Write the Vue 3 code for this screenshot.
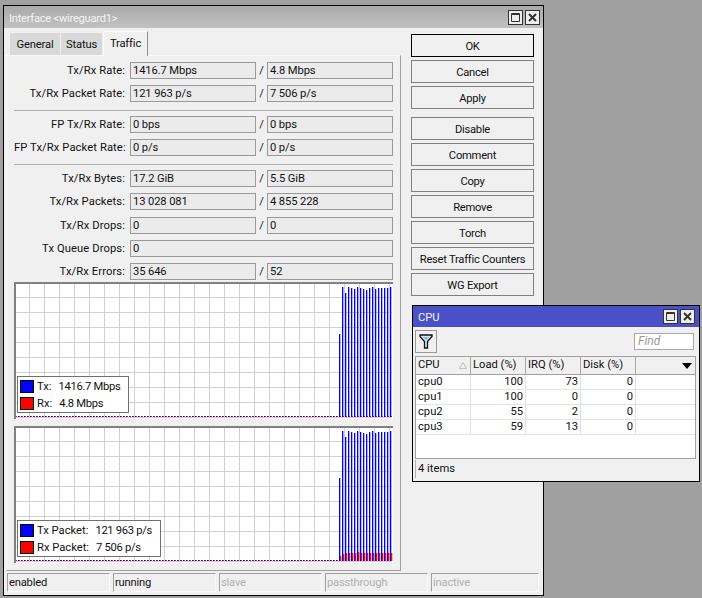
<template>
  <div class="desktop">
    <div class="window main-win">
      <div class="titlebar">
        <span class="title main-title">Interface &lt;wireguard1&gt;</span>
        <span class="win-btn"><svg width="13" height="13" viewBox="0 0 13 13"><path d="M2.5 2.500h8v8h-8zM2.500 3.500h8" fill="none" stroke="#333" /></svg></span>
        <span class="win-btn"><svg width="13" height="13" viewBox="0 0 13 13"><path d="M3 3l7 7M10 3l-7 7" fill="none" stroke="#333" stroke-width="2" /></svg></span>
      </div>
      <div class="win-body">
        <div class="left-col">
          <div class="tabs">
            <div v-for="t in tabs" :key="t.name" class="tab" :class="{ active: t.name === 'Traffic' }" :style="{ width: t.w + 'px' }">{{ t.name }}</div>
          </div>
          <div class="panel">
            <template v-for="(group, i) in groups" :key="i">
              <div v-if="i" class="sep"></div>
              <div class="group" :class="{ loose: i === 2 }">
                <div v-for="row in group" :key="row.label" class="row">
                  <span class="row-label">{{ row.label }}:</span>
                  <span v-if="row.rx === undefined" class="field wide">{{ row.tx }}</span>
                  <template v-else>
                    <span class="field">{{ row.tx }}</span>
                    <span class="slash">/</span>
                    <span class="field">{{ row.rx }}</span>
                  </template>
                </div>
              </div>
            </template>
            <div v-for="g in graphs" :key="g.id" class="graph">
              <svg class="graph-svg" width="377" height="135" viewBox="0 0 377 135">
                <defs>
                  <pattern :id="'dots-' + g.id" width="3" height="1" patternUnits="userSpaceOnUse">
                    <rect x="2" width="1" height="1" fill="#0000ff" />
                    <rect x="0" width="1" height="1" fill="#ff0000" />
                  </pattern>
                </defs>
                <path :d="gridPath" stroke="#d0d0d0" fill="none" />
                <rect x="0" y="132" width="376" height="1" :fill="'url(#dots-' + g.id + ')'" />
                <rect v-for="b in g.bars" :key="b.x" :x="b.x" :y="b.y" width="1.3" :height="b.h" :fill="b.c" />
              </svg>
              <div class="legend">
                <div v-for="l in g.legend" :key="l.name" class="legend-row">
                  <span class="swatch" :class="l.cls"></span>
                  <span class="legend-name">{{ l.name }}:</span>
                  <span class="legend-value">{{ l.value }}</span>
                </div>
              </div>
            </div>
          </div>
        </div>
        <div class="actions">
          <button v-for="b in buttons" :key="b" class="btn" :class="{ primary: b === 'OK', gap: b === 'Disable' }">{{ b }}</button>
        </div>
      </div>
      <div class="statusbar">
        <div v-for="s in statuses" :key="s.t" class="status-cell" :class="{ off: s.off }">{{ s.t }}</div>
      </div>
    </div>

    <div class="window cpu-win">
      <div class="titlebar cpu-title">
        <span class="title">CPU</span>
        <span class="win-btn"><svg width="13" height="13" viewBox="0 0 13 13"><path d="M2.5 2.500h8v8h-8zM2.500 3.500h8" fill="none" stroke="#333" /></svg></span>
        <span class="win-btn"><svg width="13" height="13" viewBox="0 0 13 13"><path d="M3 3l7 7M10 3l-7 7" fill="none" stroke="#333" stroke-width="2" /></svg></span>
      </div>
      <div class="toolbar">
        <span class="filter-btn">
          <svg width="14" height="15" viewBox="0 0 14 15"><path d="M1 1h12v1.500L8.500 7.500V14h-3V7.500L1 2.500z" fill="#d4e6f4" stroke="#111" stroke-width="1.300" /><path d="M4 3h6L7 6.500z" fill="#8ebce0" /></svg>
        </span>
        <span class="find">Find</span>
      </div>
      <div class="table">
        <div class="t-head">
          <div class="th c-num">CPU<svg class="sort" width="8" height="7" viewBox="0 0 8 7"><path d="M4 .5L7.500 6.500H.5z" fill="none" stroke="#c0c0c0" /></svg></div>
          <div class="th c-num">Load (%)</div>
          <div class="th c-num">IRQ (%)</div>
          <div class="th c-num">Disk (%)</div>
          <div class="th c-rest"><span class="caret"></span></div>
        </div>
        <div v-for="c in cpus" :key="c.name" class="t-row">
          <div class="td c-num">{{ c.name }}</div>
          <div class="td c-num right">{{ c.load }}</div>
          <div class="td c-num right">{{ c.irq }}</div>
          <div class="td c-num right">{{ c.disk }}</div>
          <div class="td c-rest"></div>
        </div>
      </div>
      <div class="items">4 items</div>
    </div>
  </div>
</template>

<script setup>
const tabs = [
  { name: 'General', w: 50 },
  { name: 'Status', w: 41 },
  { name: 'Traffic', w: 45 }
]

const groups = [
  [
    { label: 'Tx/Rx Rate', tx: '1416.7 Mbps', rx: '4.8 Mbps' },
    { label: 'Tx/Rx Packet Rate', tx: '121 963 p/s', rx: '7 506 p/s' }
  ],
  [
    { label: 'FP Tx/Rx Rate', tx: '0 bps', rx: '0 bps' },
    { label: 'FP Tx/Rx Packet Rate', tx: '0 p/s', rx: '0 p/s' }
  ],
  [
    { label: 'Tx/Rx Bytes', tx: '17.2 GiB', rx: '5.5 GiB' },
    { label: 'Tx/Rx Packets', tx: '13 028 081', rx: '4 855 228' },
    { label: 'Tx/Rx Drops', tx: '0', rx: '0' },
    { label: 'Tx Queue Drops', tx: '0' },
    { label: 'Tx/Rx Errors', tx: '35 646', rx: '52' }
  ]
]

const buttons = ['OK', 'Cancel', 'Apply', 'Disable', 'Comment', 'Copy', 'Remove', 'Torch', 'Reset Traffic Counters', 'WG Export']

const statuses = [
  { t: 'enabled' },
  { t: 'running' },
  { t: 'slave', off: true },
  { t: 'passthrough', off: true },
  { t: 'inactive', off: true }
]

const cpus = [
  { name: 'cpu0', load: 100, irq: 73, disk: 0 },
  { name: 'cpu1', load: 100, irq: 0, disk: 0 },
  { name: 'cpu2', load: 55, irq: 2, disk: 0 },
  { name: 'cpu3', load: 59, irq: 13, disk: 0 }
]

// grid lines every 15px
let gridPath = ''
for (let x = 13.5; x < 376; x += 15) gridPath += `M${x} 0V134`
for (let y = 13.5; y < 134; y += 15) gridPath += `M0 ${y}H376`

// top of each bar, px from the top of the plot
const tops = [50, 3, 9, 3, 4, 5, 3, 4, 5, 6, 4, 3, 5, 4, 4, 4, 4, 3]
const reds = [5, 7, 8, 8, 8, 8, 9, 8, 8, 8, 8, 8, 8, 8, 8, 8, 8, 8]

const bars1 = tops.map((y, i) => ({ x: 323 + i * 3, y, h: 133 - y, c: '#0000ff' }))

const bars2 = []
tops.forEach((y, i) => {
  bars2.push({ x: 323 + i * 3, y, h: 133 - y, c: '#0000ff' })
  bars2.push({ x: 324 + i * 3, y: 133 - reds[i], h: reds[i], c: '#ff0000' })
})

const graphs = [
  {
    id: 'rate',
    bars: bars1,
    legend: [
      { name: 'Tx', value: '1416.7 Mbps', cls: 'blue' },
      { name: 'Rx', value: '4.8 Mbps', cls: 'red' }
    ]
  },
  {
    id: 'packet',
    bars: bars2,
    legend: [
      { name: 'Tx Packet', value: '121 963 p/s', cls: 'blue' },
      { name: 'Rx Packet', value: '7 506 p/s', cls: 'red' }
    ]
  }
]
</script>

<style scoped>
.desktop {
  position: relative;
  width: 702px;
  height: 598px;
  overflow: hidden;
  background: #a0a0a0;
  font-family: Roboto, "Liberation Sans", sans-serif;
  font-size: 11.2px;
  color: #111;
}

.window {
  position: absolute;
  box-sizing: border-box;
  border: 1px solid #000;
  background: #f0f0f0;
  display: flex;
  flex-direction: column;
}

.main-win {
  left: 3px;
  top: 5px;
  width: 541px;
  height: 591px;
}

.cpu-win {
  left: 412px;
  top: 305px;
  width: 288px;
  height: 177px;
}

.titlebar {
  height: 22px;
  flex: none;
  display: flex;
  align-items: center;
  gap: 2px;
  padding: 0 3px 0 5px;
  background: linear-gradient(#a9a9a9, #c2c2c2);
}

.cpu-title {
  height: 21px;
  padding-right: 4px;
  background: #4b50c6;
}

.title {
  flex: 1;
  padding-top: 1px;
  color: #f4f4f4;
  font-size: 11.2px;
}

.main-title {
  padding-top: 3px;
  letter-spacing: -0.27px;
}

.win-btn {
  box-sizing: border-box;
  width: 15px;
  height: 15px;
  display: flex;
  align-items: center;
  justify-content: center;
  border: 1px solid #333;
  background: #eee;
}

.win-body {
  flex: 1;
  display: flex;
  padding: 2px 0 0 2px;
}

.left-col {
  width: 395px;
  margin-right: 10px;
}

.tabs {
  display: flex;
  align-items: flex-end;
  height: 25px;
  padding-left: 4px;
  gap: 1px;
}

.tab {
  box-sizing: border-box;
  height: 22px;
  line-height: 24px;
  text-align: center;
  letter-spacing: -0.15px;
  background: #d9d9d9;
}

.tab.active {
  height: 25px;
  line-height: 24px;
  margin-bottom: -1px;
  background: #f0f0f0;
  border-top: 1px solid #fafafa;
  border-left: 1px solid #fafafa;
  border-right: 1px solid #909090;
  position: relative;
  z-index: 1;
}

.panel {
  box-sizing: border-box;
  height: 516px;
  border-top: 1px solid #fafafa;
  border-left: 1px solid #fafafa;
  border-right: 1px solid #a0a0a0;
  border-bottom: 1px solid #a0a0a0;
  padding: 6px 7px 0 7px;
}

.group {
  display: flex;
  flex-direction: column;
  gap: 6px;
}

.group.loose {
  gap: 6.25px;
}

.sep {
  height: 1px;
  background: #b4b4b4;
  margin: 8px 0 5px;
}

.row {
  display: flex;
  align-items: center;
  height: 17px;
}

.row-label {
  box-sizing: border-box;
  width: 116px;
  flex: none;
  padding-right: 5px;
  text-align: right;
  letter-spacing: 0.1px;
  white-space: nowrap;
}

.field {
  box-sizing: border-box;
  width: 126px;
  height: 17px;
  line-height: 15px;
  padding-left: 2px;
  background: #ebebeb;
  border: 1px solid #999;
  letter-spacing: -0.12px;
  white-space: nowrap;
}

.field.wide {
  width: 263px;
}

.slash {
  width: 11px;
  text-align: center;
}

.graph {
  position: relative;
  box-sizing: border-box;
  width: 379px;
  height: 137px;
  margin-top: 7px;
  background: #fff;
  border-top: 2px solid #808080;
  border-left: 2px solid #808080;
}

.group + .graph {
  margin-top: 2px;
}

.graph-svg {
  display: block;
}

.legend {
  position: absolute;
  left: 1px;
  bottom: 6px;
  box-sizing: border-box;
  height: 37px;
  padding: 1px 8px 1px 2px;
  background: #fff;
  border: 1px solid #707070;
}

.legend-row {
  display: flex;
  align-items: center;
  height: 17px;
  white-space: pre;
}

.swatch {
  box-sizing: border-box;
  width: 14px;
  height: 13px;
  margin-right: 3px;
  border: 1px solid #000;
}

.swatch.blue {
  background: #0000ff;
}

.swatch.red {
  background: #ff0000;
}

.legend-name {
  margin-right: 7px;
}

.legend-value {
  letter-spacing: -0.3px;
}

.actions {
  display: flex;
  flex-direction: column;
  gap: 3px;
  padding-top: 4px;
}

.btn {
  box-sizing: border-box;
  width: 123px;
  height: 23px;
  padding: 1px 0 0;
  background: #f0f0f0;
  border: 1px solid #808080;
  font: inherit;
  letter-spacing: -0.25px;
  color: #111;
}

.btn.primary {
  border-color: #000;
}

.btn.gap {
  margin-top: 5px;
}

.statusbar {
  display: flex;
  gap: 3px;
  height: 19px;
  margin: 2px 4px 3px 3px;
  flex: none;
}

.status-cell {
  box-sizing: border-box;
  width: 103px;
  flex: none;
  padding-left: 1px;
  line-height: 18px;
  letter-spacing: -0.2px;
  border-top: 1px solid #a0a0a0;
  border-left: 1px solid #a0a0a0;
  border-right: 1px solid #fafafa;
  border-bottom: 1px solid #fafafa;
}

.status-cell:last-child {
  flex: 1;
}

.status-cell.off {
  color: #b0b0b0;
}

.toolbar {
  display: flex;
  justify-content: space-between;
  align-items: center;
  height: 29px;
  box-sizing: border-box;
  padding: 0 5px 0 2px;
  flex: none;
}

.filter-btn {
  box-sizing: border-box;
  width: 22px;
  height: 23px;
  display: flex;
  align-items: center;
  justify-content: center;
  background: #f0f0f0;
  border: 1px solid #999;
}

.find {
  box-sizing: border-box;
  width: 60px;
  height: 17px;
  line-height: 15px;
  padding-left: 3px;
  background: #fff;
  border: 1px solid #aaa;
  color: #9a9a9a;
  font-size: 12px;
  font-style: italic;
}

.table {
  box-sizing: border-box;
  margin: 0 3px 0 2px;
  height: 103px;
  flex: none;
  background: #fff;
  border: 1px solid #a0a0a0;
}

.t-head,
.t-row {
  display: flex;
}

.t-head {
  height: 17px;
  background: #f0f0f0;
  border-bottom: 1px solid #a0a0a0;
}

.t-row {
  height: 15px;
  border-bottom: 1px solid #e4e4e4;
  box-sizing: border-box;
}

.th,
.td {
  box-sizing: border-box;
  flex: none;
  padding: 0 2px;
  border-right: 1px solid #e0e0e0;
  white-space: nowrap;
}

.th {
  line-height: 16px;
  border-right-color: #a8a8a8;
  position: relative;
}

.td {
  line-height: 14px;
}

.c-num {
  width: 55px;
}

.c-rest {
  flex: 1;
  border-right: none;
}

.right {
  text-align: right;
}

.sort {
  position: absolute;
  right: 3px;
  top: 5px;
}

.caret {
  position: absolute;
  right: 3px;
  top: 6px;
  border-left: 5px solid transparent;
  border-right: 5px solid transparent;
  border-top: 6px solid #000;
}

.items {
  margin: 1px 3px 0 2px;
  padding-left: 2px;
  height: 18px;
  line-height: 18px;
  border-left: 1px solid #b0b0b0;
}
</style>

<style>
html,
body {
  background: #a0a0a0;
}
</style>
